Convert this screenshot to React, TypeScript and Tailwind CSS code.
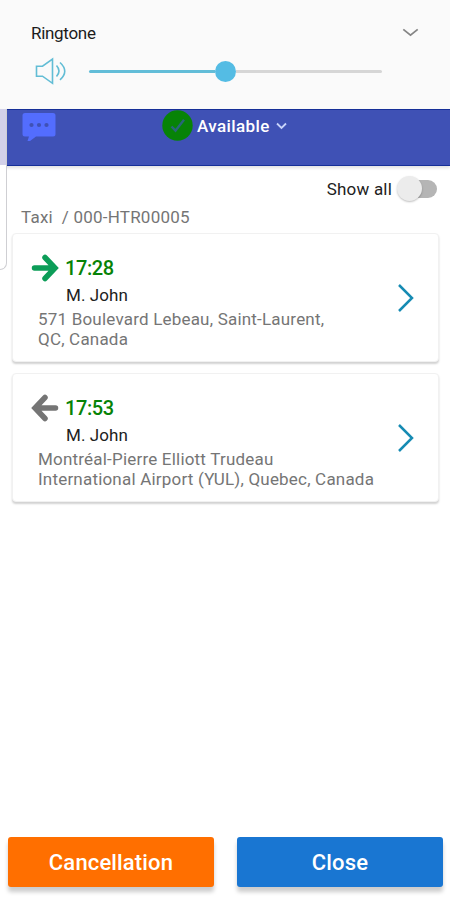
import React from 'react';

interface Trip {
  time: string;
  name: string;
  address: string[];
  pickup: boolean;
}

const trips: Trip[] = [
  {
    time: '17:28',
    name: 'M. John',
    address: ['571 Boulevard Lebeau, Saint-Laurent,', 'QC, Canada'],
    pickup: true,
  },
  {
    time: '17:53',
    name: 'M. John',
    address: ['Montréal-Pierre Elliott Trudeau', 'International Airport (YUL), Quebec, Canada'],
    pickup: false,
  },
];

const VolumePanel: React.FC = () => (
  <div className="h-[109px] bg-[#fafafa] pt-[22px]">
    <div className="flex h-[22px] items-center justify-between pl-[31px] pr-[31px]">
      <span className="text-[17px] leading-[22px] tracking-[-0.3px] text-[#1c1c1c]">Ringtone</span>
      <svg className="mt-[-2px] h-[9px] w-[17px]" viewBox="0 0 18 10" fill="none" stroke="#858585" strokeWidth="2">
        <path d="M1 1.5 9 8l8-6.5" />
      </svg>
    </div>
    <div className="mt-[12px] flex h-[30px] items-center pl-[35px]">
      <svg className="h-[28px] w-[32px]" viewBox="0 0 32 28" fill="none" stroke="#62bdd5" strokeWidth="1.6">
        <path d="M1.5 9.2h6L17.500 2v24.3L7.5 19.2h-6z" />
        <path d="M21.5 8.5q5 5.500 0 11M25 5.500q9.500 8.700 0 17.400" />
      </svg>
      <div className="ml-[22px] flex w-[293px] items-center">
        <div className="h-[3px] w-[126px] rounded-l bg-[#62bdd8]" />
        <div className="h-[21px] w-[21px] rounded-full bg-[#54bce4]" />
        <div className="h-[3px] flex-1 rounded-r bg-[#d6d6d6]" />
      </div>
    </div>
  </div>
);

const StatusBar: React.FC = () => (
  <div className="flex h-[57px] items-start border-y border-[#162f98] bg-[#3f51b5] shadow-[0_2px_3px_rgba(0,0,0,0.12)]">
    <svg className="ml-[22px] mt-[3px] h-[30px] w-[34px]" viewBox="0 0 34 30">
      <path
        d="M3 0h28q2.500 0 2.500 2.500v18.500q0 2.500-2.500 2.500H14l-6 4.500H5.500l1.500-4.500H3q-2.500 0-2.500-2.500V2.500Q.5 0 3 0z"
        fill="#536dfe"
      />
      <g fill="#3f51b5">
        <circle cx="9.500" cy="12" r="2.100" />
        <circle cx="17" cy="12" r="2.100" />
        <circle cx="24.500" cy="12" r="2.100" />
      </g>
    </svg>
    <div className="ml-[106px] flex h-[31px] items-center">
      <svg className="h-[31px] w-[31px]" viewBox="0 0 31 31" fill="none">
        <circle cx="15.500" cy="15.500" r="15.200" fill="#078307" />
        <path d="m9.500 16.500 4 4.200 8.500-11" stroke="#28667a" strokeWidth="2.400" />
      </svg>
      <span className="ml-[4px] text-[17px] font-medium leading-[22px] tracking-[0.4px] text-white">Available</span>
      <svg className="ml-[6px] h-[8px] w-[11px]" viewBox="0 0 11 8" fill="none" stroke="#c8d3fa" strokeWidth="1.800">
        <path d="m1 1.500 4.500 4.500L10 1.500" />
      </svg>
    </div>
  </div>
);

const TripArrow: React.FC<{ pickup: boolean }> = ({ pickup }) => (
  <svg
    className={pickup ? 'h-[28px] w-[28px] text-[#0c9d58]' : 'h-[28px] w-[28px] rotate-180 text-[#757575]'}
    viewBox="0 0 28 28"
    fill="none"
    stroke="currentColor"
    strokeWidth="5.500"
    strokeLinecap="round"
  >
    <path d="M3.500 14h20M14 3.500 24 14 14 24.500" />
  </svg>
);

const TripCard: React.FC<{ trip: Trip }> = ({ trip }) => (
  <div className="flex h-[129px] items-center justify-between rounded-[4px] border border-[#f1f1f1] bg-white pr-[24px] shadow-[0_2px_2px_rgba(0,0,0,0.18)]">
    <div className="h-full pl-[25px] pt-[19px]">
      <div className="-ml-[7px] flex h-[29px] items-center">
        <TripArrow pickup={trip.pickup} />
        <span className="ml-[6px] text-[20px] font-medium leading-[28px] tracking-[-0.4px] text-[#078307]">
          {trip.time}
        </span>
      </div>
      <p className="ml-[28px] text-[17px] leading-[27px] tracking-[0.1px] text-[#212121]">{trip.name}</p>
      {trip.address.map((line) => (
        <p key={line} className="whitespace-nowrap text-[17px] leading-[20px] tracking-[0.2px] text-[#757575]">
          {line}
        </p>
      ))}
    </div>
    <svg className="h-[28px] w-[17px]" viewBox="0 0 17 28" fill="none" stroke="#168bb3" strokeWidth="2.500">
      <path d="M2 1 15 14 2 27" />
    </svg>
  </div>
);

const App: React.FC = () => {
  return (
    <div className="relative flex h-[900px] w-[450px] flex-col overflow-hidden bg-white font-['Roboto','Liberation_Sans',sans-serif]">
      <VolumePanel />
      <StatusBar />
      {/* edge panel that slides over the page */}
      <div className="absolute left-0 top-[109px] h-[161px] w-[7px] rounded-br-[7px] border-b border-r border-[#cfcfd3] bg-white">
        <div className="h-[56px] bg-[#d3d1e9]" />
      </div>
      <div className="flex h-[45px] items-center justify-end pr-[13px]">
        <span className="text-[17px] leading-[22px] tracking-[0.2px] text-[#212121]">Show all</span>
        <div className="ml-[5px] flex items-center">
          <div className="z-10 h-[25px] w-[25px] rounded-full bg-[#ececec] shadow-[0_1px_2px_rgba(0,0,0,0.25)]" />
          <div className="-ml-[10px] h-[18px] w-[25px] rounded-r-full bg-[#b5b5b5]" />
        </div>
      </div>
      <p className="h-[22px] whitespace-pre pl-[21px] text-[17px] leading-[13px] tracking-[0.22px] text-[#757575]">
        {'Taxi  / 000-HTR00005'}
      </p>
      <div className="flex flex-col gap-[11px] pl-[12px] pr-[11px]">
        {trips.map((trip) => (
          <TripCard key={trip.time} trip={trip} />
        ))}
      </div>
      <div className="mt-auto flex justify-between pb-[13px] pl-[8px] pr-[7px]">
        <button className="h-[50px] w-[206px] rounded-[3px] bg-[#ff6f00] text-[22px] font-medium leading-[52px] tracking-[0.15px] text-white shadow-[0_5px_4px_rgba(0,0,0,0.2)]">
          Cancellation
        </button>
        <button className="h-[50px] w-[206px] rounded-[3px] bg-[#1976d2] text-[22px] font-medium leading-[52px] tracking-[0.15px] text-white shadow-[0_5px_4px_rgba(0,0,0,0.2)]">
          Close
        </button>
      </div>
    </div>
  );
};

export default App;
